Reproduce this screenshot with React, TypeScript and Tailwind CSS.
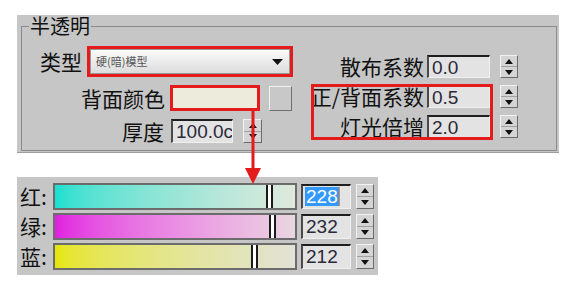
import React from 'react'

// 3ds Max 风格的半透明参数面板 + RGB 颜色滑块

function Spinner({ className }: { className: string }) {
  return (
    <div className={`flex flex-col border border-t-[#f2f2f2] border-l-[#f2f2f2] border-r-[#6a6a6a] border-b-[#6a6a6a] bg-[#d4d4d4] ${className}`}>
      <div className="flex-1 flex items-center justify-center border-b border-[#a0a0a0]">
        <svg width="8" height="5" viewBox="0 0 8 5">
          <path d="M4 0L8 5H0Z" fill="#111" />
        </svg>
      </div>
      <div className="flex-1 flex items-center justify-center">
        <svg width="8" height="5" viewBox="0 0 8 5">
          <path d="M0 0H8L4 5Z" fill="#111" />
        </svg>
      </div>
    </div>
  )
}

function NumBox({ value, className }: { value: string; className: string }) {
  return (
    <div className={`flex items-center overflow-hidden border-t-2 border-l-2 border-r border-b border-t-[#1e1e1e] border-l-[#4a4a4a] border-r-[#f0f0f0] border-b-[#f0f0f0] bg-[#e3e3e3] pl-[3px] font-['Liberation_Sans',sans-serif] text-[19px] leading-none text-[#2a2a3a] whitespace-nowrap ${className}`}>
      {value}
    </div>
  )
}

const rows = [
  { label: '红', value: 228, from: 'from-[#14e0d0]', to: 'to-[#dfe9dd]', selected: true },
  { label: '绿', value: 232, from: 'from-[#e11ee0]', to: 'to-[#e9d6e0]', selected: false },
  { label: '蓝', value: 212, from: 'from-[#e6e600]', to: 'to-[#e2e2d6]', selected: false },
]

export default function App() {
  return (
    <div className="relative w-[570px] h-[291px] bg-white overflow-hidden font-['Noto_Sans_CJK_SC',sans-serif] text-[#111]">
      <div className="pt-[15px] pl-[17px]">
        {/* 半透明 */}
        <div className="relative w-[542px] h-[138px] bg-[#c6c6c6] pl-[4px] pr-[2px] border-b border-[#9c9c9c]">
          <fieldset className="h-[136px] border border-[#8a8a8a]">
            <legend className="ml-[7px] px-[1px] text-[20px] leading-[22px]">半透明</legend>
            <div className="flex">
              {/* 左列 */}
              <div className="flex flex-col w-[271px] pt-[9px] text-[21px] leading-none">
                <div className="flex items-center h-[31px] pl-[18px]">
                  <span>类型</span>
                  <div className="ml-[5px] w-[206px] h-full border-[3px] border-[#e31b1b]">
                    <div className="flex items-center justify-between h-full bg-linear-to-b from-[#fbfbfb] to-[#dcdcdc] border border-[#9a9a9a] pl-[5px] pr-[6px]">
                      <span className="text-[11px] text-[#555]">硬(暗)模型</span>
                      <svg width="11" height="6" viewBox="0 0 11 6">
                        <path d="M0 0H11L5.5 6Z" fill="#111" />
                      </svg>
                    </div>
                  </div>
                </div>
                <div className="flex items-center h-[26px] mt-[8px]">
                  <span className="w-[143px] text-right">背面颜色</span>
                  <div className="ml-[5px] w-[90px] h-full border-[3px] border-[#e31b1b] bg-[#ecebdc]" />
                  <div className="ml-[9px] w-[23px] h-[25px] bg-[#c8c8c8] border border-t-[#f0f0f0] border-l-[#f0f0f0] border-r-[#6e6e6e] border-b-[#6e6e6e]" />
                </div>
                <div className="flex items-center h-[24px] mt-[8px]">
                  <span className="w-[142px] text-right">厚度</span>
                  <NumBox value="100.0c" className="ml-[7px] w-[62px] h-full" />
                  <Spinner className="ml-[10px] w-[19px] h-full" />
                </div>
              </div>
              {/* 右列 */}
              <div className="flex flex-col pt-[18px] text-[21px] leading-none">
                {[
                  ['散布系数', '0.0'],
                  ['正/背面系数', '0.5'],
                  ['灯光倍增', '2.0'],
                ].map(([label, value], i) => (
                  <div key={label} className={`flex items-center h-[23px] ${i > 0 ? 'mt-[7px]' : ''}`}>
                    <span className="w-[131px] text-right whitespace-nowrap">{label}</span>
                    <NumBox value={value} className="ml-[3px] w-[63px] h-full" />
                    <Spinner className="ml-[10px] w-[18px] h-full" />
                  </div>
                ))}
              </div>
            </div>
          </fieldset>
          {/* 标注框 */}
          <div className="absolute left-[294px] top-[69px] w-[182px] h-[56px] border-[3px] border-[#e31b1b]" />
        </div>

        {/* RGB 滑块 */}
        <div className="mt-[24px] w-[361px] h-[98px] bg-[#c6c6c6] pt-[6px] pl-[3px] pr-[4px] flex flex-col gap-[3px]">
          {rows.map((r) => (
            <div key={r.label} className="flex items-center h-[27px]">
              <span className="w-[33px] text-[21px] leading-none">{r.label}:</span>
              <div className={`relative w-[244px] h-full border-2 border-[#6c6c6c] bg-linear-to-r ${r.from} ${r.to}`}>
                <div
                  className="absolute top-0 bottom-0 w-[7px] border-x-2 border-[#1a1a1a] bg-white"
                  style={{ left: Math.round((r.value / 255) * 240) - 4 }}
                />
              </div>
              <NumBox value="" className="ml-[4px] w-[50px] h-[25px] !pl-[2px]" />
              <Spinner className="ml-[5px] w-[18px] h-[25px]" />
            </div>
          ))}
        </div>
      </div>

      {/* 覆盖数字：保持选中状态 */}
      <div className="absolute left-[301px] top-[183px] flex flex-col gap-[3px] pointer-events-none">
        {rows.map((r) => (
          <div key={r.label} className="h-[27px] flex items-center pl-[4px] font-['Liberation_Sans',sans-serif] text-[19px] leading-none">
            {r.selected ? (
              <span className="bg-[#3399ff] text-white px-[1px] border-r border-[#e08a3c]">{r.value}</span>
            ) : (
              <span className="text-[#2a2a3a] px-[1px]">{r.value}</span>
            )}
          </div>
        ))}
      </div>

      {/* 红色箭头 */}
      <svg className="absolute left-[245px] top-[111px]" width="16" height="74" viewBox="0 0 16 74">
        <rect x="6.5" y="0" width="3" height="60" fill="#e31b1b" />
        <path d="M0 57H16L8 73Z" fill="#e31b1b" />
      </svg>
    </div>
  )
}
